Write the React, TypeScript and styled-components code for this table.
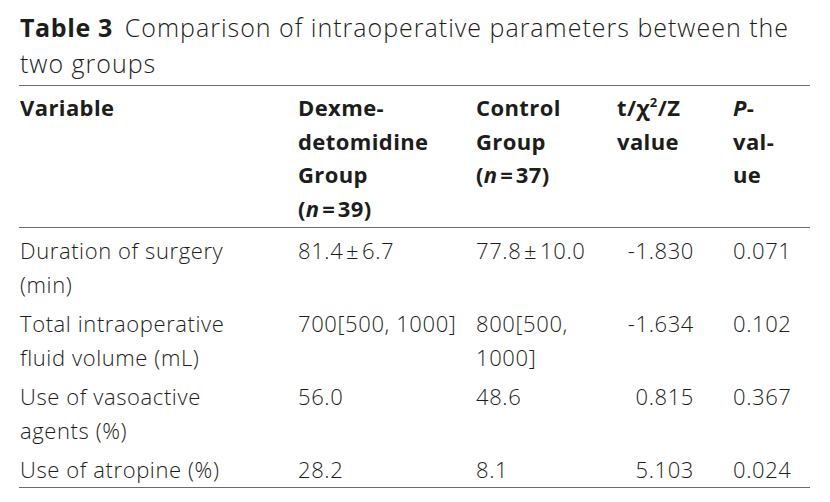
import React from "react";
import styled, { createGlobalStyle } from "styled-components";

const Global = createGlobalStyle`
  html, body { margin: 0; padding: 0; background: #ffffff; }
  body { font-family: "Open Sans", "Noto Sans", sans-serif; color: #1d1d1b; }
`;

const Page = styled.div`
  width: 791px;
  padding: 9px 0 0 19px;
`;

const Caption = styled.div`
  font-size: 25px;
  line-height: 36px;
  font-weight: 300;
  letter-spacing: 1px;
  padding-left: 1px;
  padding-bottom: 4px;
  white-space: nowrap;
`;

const CaptionLabel = styled.span`
  font-weight: 700;
  letter-spacing: 0.6px;
  margin-right: 12px;
`;

const Table = styled.div`
  border-top: 1px solid #6b6b6b;
  border-bottom: 1px solid #6b6b6b;
`;

const Row = styled.div<{ $head?: boolean }>`
  display: grid;
  grid-template-columns: 278px 178px 141px 116px 78px;
  padding-top: ${(p) => (p.$head ? "5px" : "6px")};
  padding-bottom: ${(p) => (p.$head ? "2px" : "0")};
  border-bottom: ${(p) => (p.$head ? "1px solid #6b6b6b" : "none")};
  font-size: 22px;
  line-height: 33.5px;
  font-weight: ${(p) => (p.$head ? 700 : 300)};
  letter-spacing: ${(p) => (p.$head ? "0.4px" : "0.6px")};
`;

const Cell = styled.div<{ $num?: boolean }>`
  padding-left: 1px;
  padding-right: ${(p) => (p.$num ? "38px" : "0")};
  text-align: ${(p) => (p.$num ? "right" : "left")};
  white-space: nowrap;
`;

const Sup = styled.sup`
  font-size: 13px;
  line-height: 0;
  vertical-align: 9px;
`;

type Line = React.ReactNode;

const lines = (...ls: Line[]) =>
  ls.map((l, i) => (
    <React.Fragment key={i}>
      {i > 0 && <br />}
      {l}
    </React.Fragment>
  ));

const rows: { v: Line[]; d: Line[]; c: Line[]; t: string; p: string }[] = [
  { v: ["Duration of surgery", "(min)"], d: ["81.4\u200a±\u200a6.7"], c: ["77.8\u200a±\u200a10.0"], t: "-1.830", p: "0.071" },
  { v: ["Total intraoperative", "fluid volume (mL)"], d: ["700[500, 1000]"], c: ["800[500,", "1000]"], t: "-1.634", p: "0.102" },
  { v: ["Use of vasoactive", "agents (%)"], d: ["56.0"], c: ["48.6"], t: "0.815", p: "0.367" },
  { v: ["Use of atropine (%)"], d: ["28.2"], c: ["8.1"], t: "5.103", p: "0.024" },
];

export default function App() {
  return (
    <Page>
      <Global />
      <Caption>
        <CaptionLabel>Table 3</CaptionLabel>Comparison of intraoperative parameters between the
        <br />
        two groups
      </Caption>
      <Table>
        <Row $head>
          <Cell>Variable</Cell>
          <Cell>
            {lines("Dexme-", "detomidine", "Group", <>(<i>n</i>{"\u200a=\u200a"}39)</>)}
          </Cell>
          <Cell>{lines("Control", "Group", <>(<i>n</i>{"\u200a=\u200a"}37)</>)}</Cell>
          <Cell>
            {lines(<>t/χ<Sup>2</Sup>/Z</>, "value")}
          </Cell>
          <Cell>{lines(<><i>P</i>-</>, "val-", "ue")}</Cell>
        </Row>
        {rows.map((r, i) => (
          <Row key={i}>
            <Cell>{lines(...r.v)}</Cell>
            <Cell>{lines(...r.d)}</Cell>
            <Cell>{lines(...r.c)}</Cell>
            <Cell $num>{r.t}</Cell>
            <Cell>{r.p}</Cell>
          </Row>
        ))}
      </Table>
    </Page>
  );
}
